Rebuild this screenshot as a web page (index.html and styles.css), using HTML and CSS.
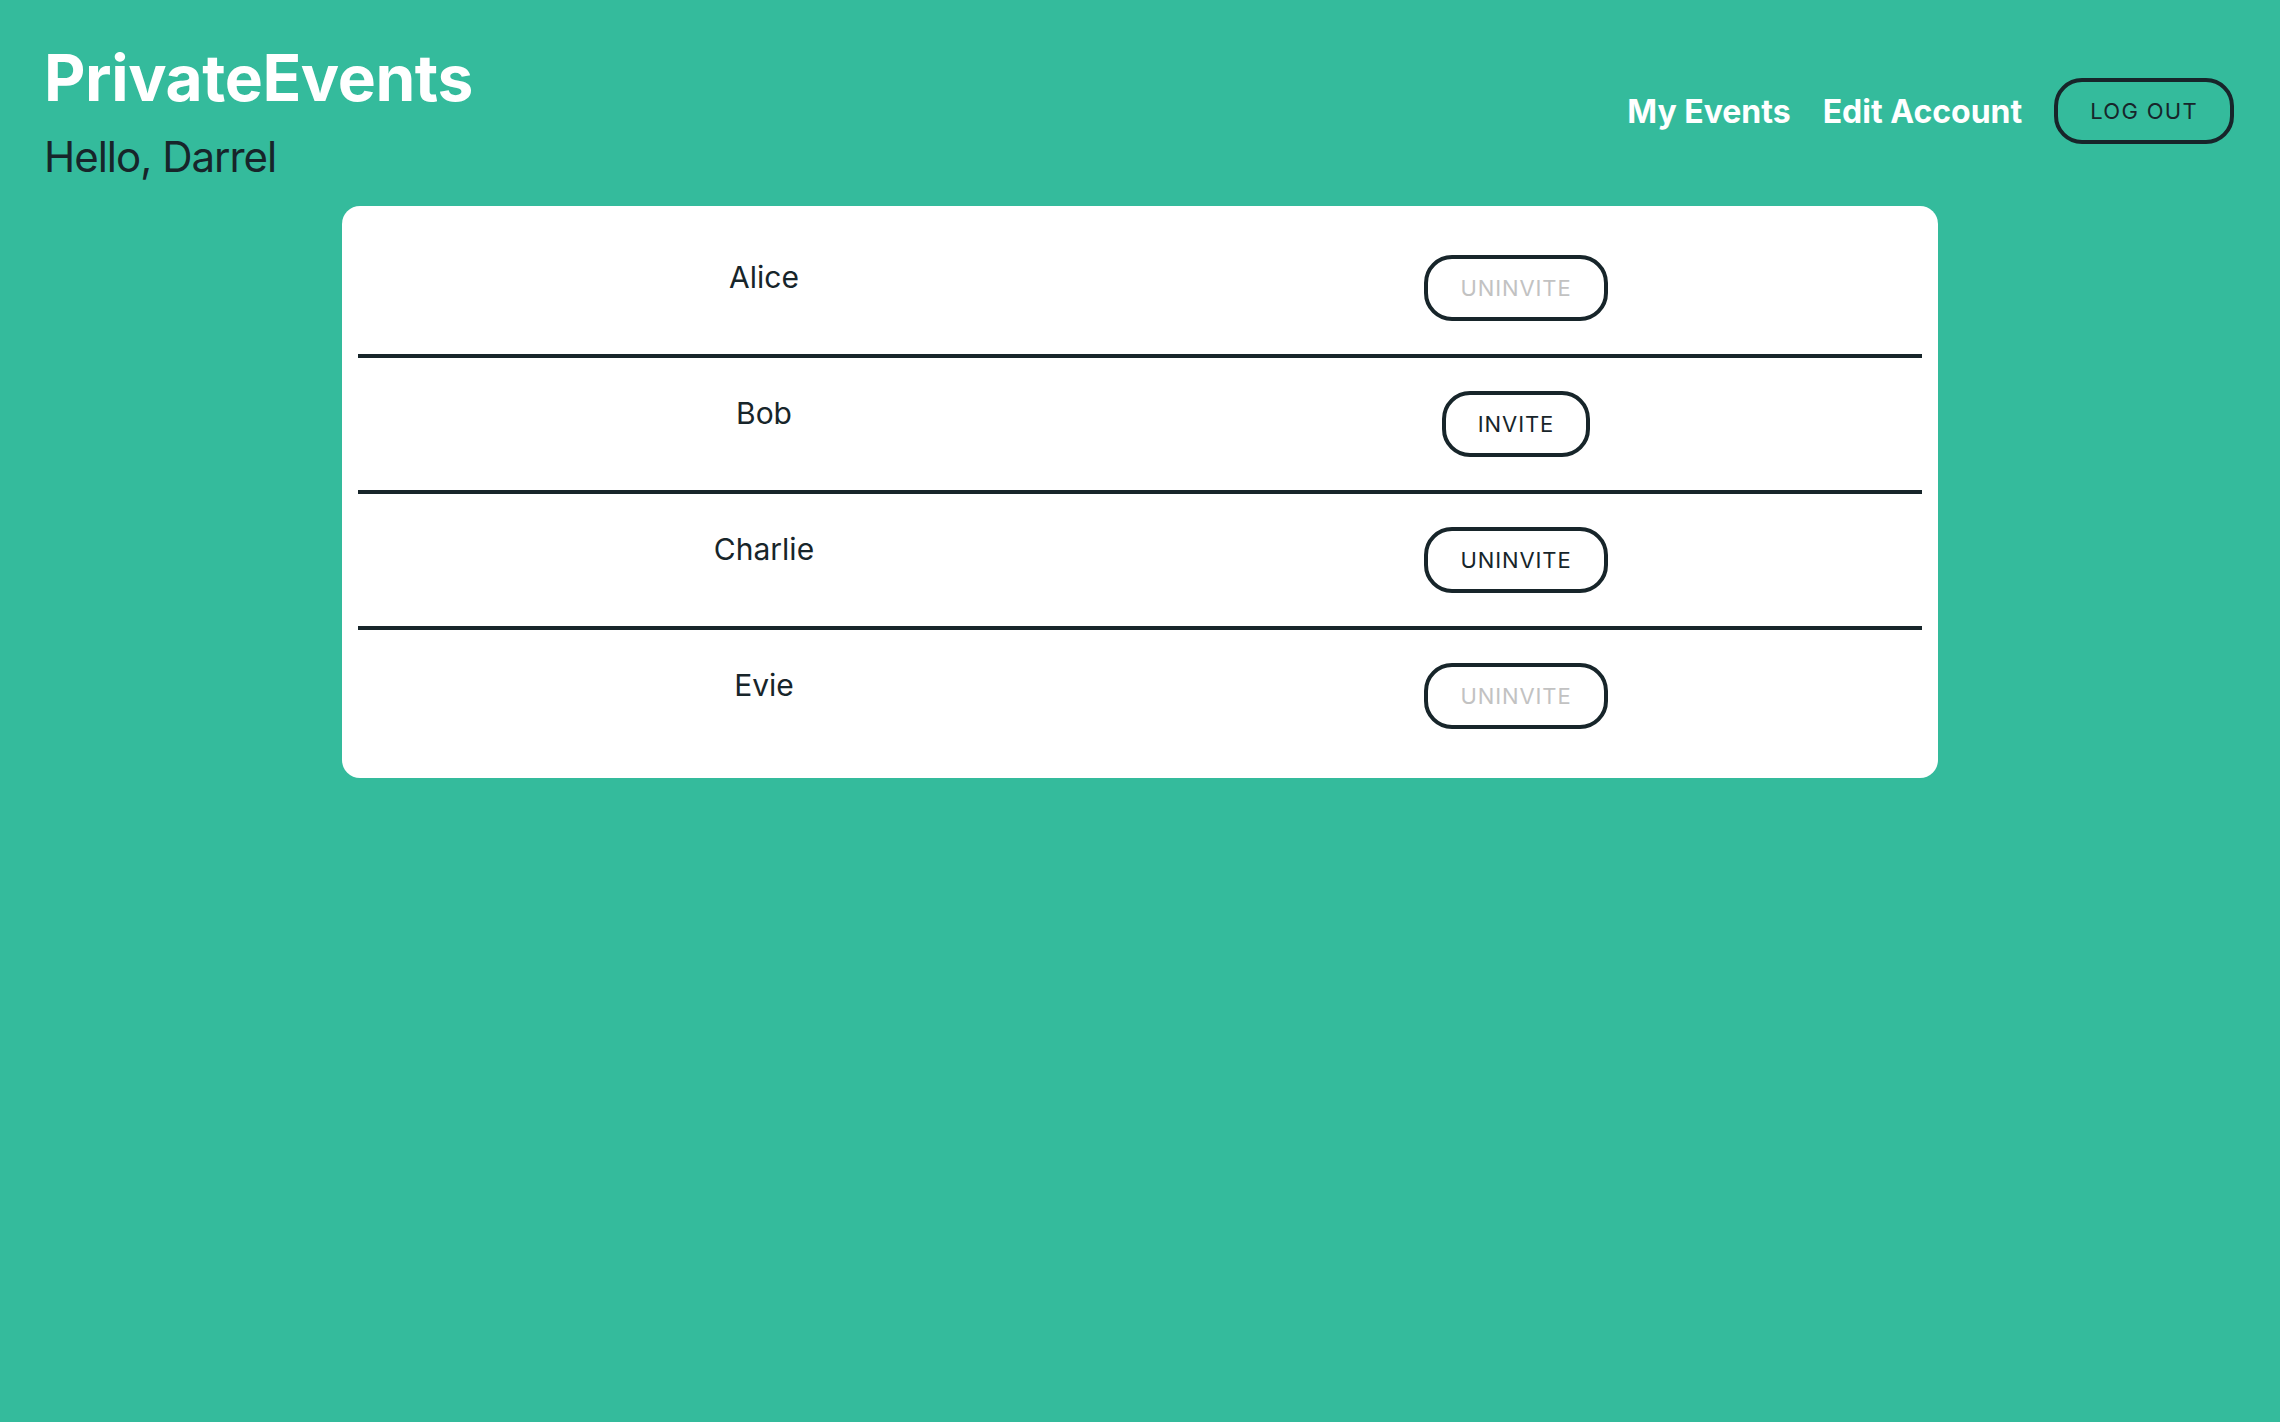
FILE: index.html
```html
<!DOCTYPE html>
<html lang="en">
<head>
<meta charset="utf-8">
<title>PrivateEvents</title>
<link rel="stylesheet" href="styles.css">
</head>
<body>
<header class="site-header">
  <div class="brand">
    <h1 class="brand-title">PrivateEvents</h1>
    <p class="greeting">Hello, Darrel</p>
  </div>
  <nav class="nav">
    <a class="nav-link" href="#">My Events</a>
    <a class="nav-link" href="#">Edit Account</a>
    <button class="btn" type="button">LOG OUT</button>
  </nav>
</header>
<main class="card">
  <div class="row">
    <div class="name">Alice</div>
    <div class="action"><button class="btn btn-disabled" type="button">UNINVITE</button></div>
  </div>
  <div class="row">
    <div class="name">Bob</div>
    <div class="action"><button class="btn" type="button">INVITE</button></div>
  </div>
  <div class="row">
    <div class="name">Charlie</div>
    <div class="action"><button class="btn" type="button">UNINVITE</button></div>
  </div>
  <div class="row">
    <div class="name">Evie</div>
    <div class="action"><button class="btn btn-disabled" type="button">UNINVITE</button></div>
  </div>
</main>
</body>
</html>
```
FILE: styles.css
```css
* { box-sizing: border-box; }

html, body {
  margin: 0;
  padding: 0;
}

body {
  background: #34bb9c;
  color: #17252a;
  font-family: Inter, "Noto Sans", "Liberation Sans", sans-serif;
  min-height: 1422px;
}

.site-header {
  display: flex;
  justify-content: space-between;
  align-items: center;
  padding: 40px 46px 24px 44px;
}

.brand-title {
  margin: 0;
  font-size: 64px;
  line-height: 76px;
  font-weight: 700;
  color: #ffffff;
  letter-spacing: -0.4px;
}

.greeting {
  margin: 16px 0 0 0;
  font-size: 42px;
  line-height: 50px;
  font-weight: 400;
  letter-spacing: -1px;
  color: #17252a;
}

.nav {
  display: flex;
  align-items: center;
  gap: 32px;
}

.nav-link {
  color: #ffffff;
  text-decoration: none;
  font-size: 32px;
  font-weight: 700;
  letter-spacing: 0;
}

.btn {
  height: 66px;
  padding: 0 32px;
  border: 4px solid #17252a;
  border-radius: 28px;
  background: transparent;
  color: #17252a;
  font-family: Inter, "Noto Sans", "Liberation Sans", sans-serif;
  font-size: 22px;
  font-weight: 400;
  letter-spacing: 0.9px;
  cursor: pointer;
}

.nav .btn {
  letter-spacing: 1.3px;
}

.card .btn {
  background: #ffffff;
}

.btn-disabled {
  color: #c2c2c2;
}

.card {
  width: 1596px;
  margin: 0 auto;
  background: #ffffff;
  border-radius: 18px;
  padding: 16px;
}

.row {
  display: grid;
  grid-template-columns: 1fr 1fr;
  align-items: start;
  padding: 33px 30px;
  border-bottom: 4px solid #17252a;
}

.row:last-child {
  border-bottom: none;
}

.name {
  text-align: center;
  font-size: 30px;
  line-height: 44px;
  font-weight: 400;
}

.action {
  display: flex;
  justify-content: center;
}
```
